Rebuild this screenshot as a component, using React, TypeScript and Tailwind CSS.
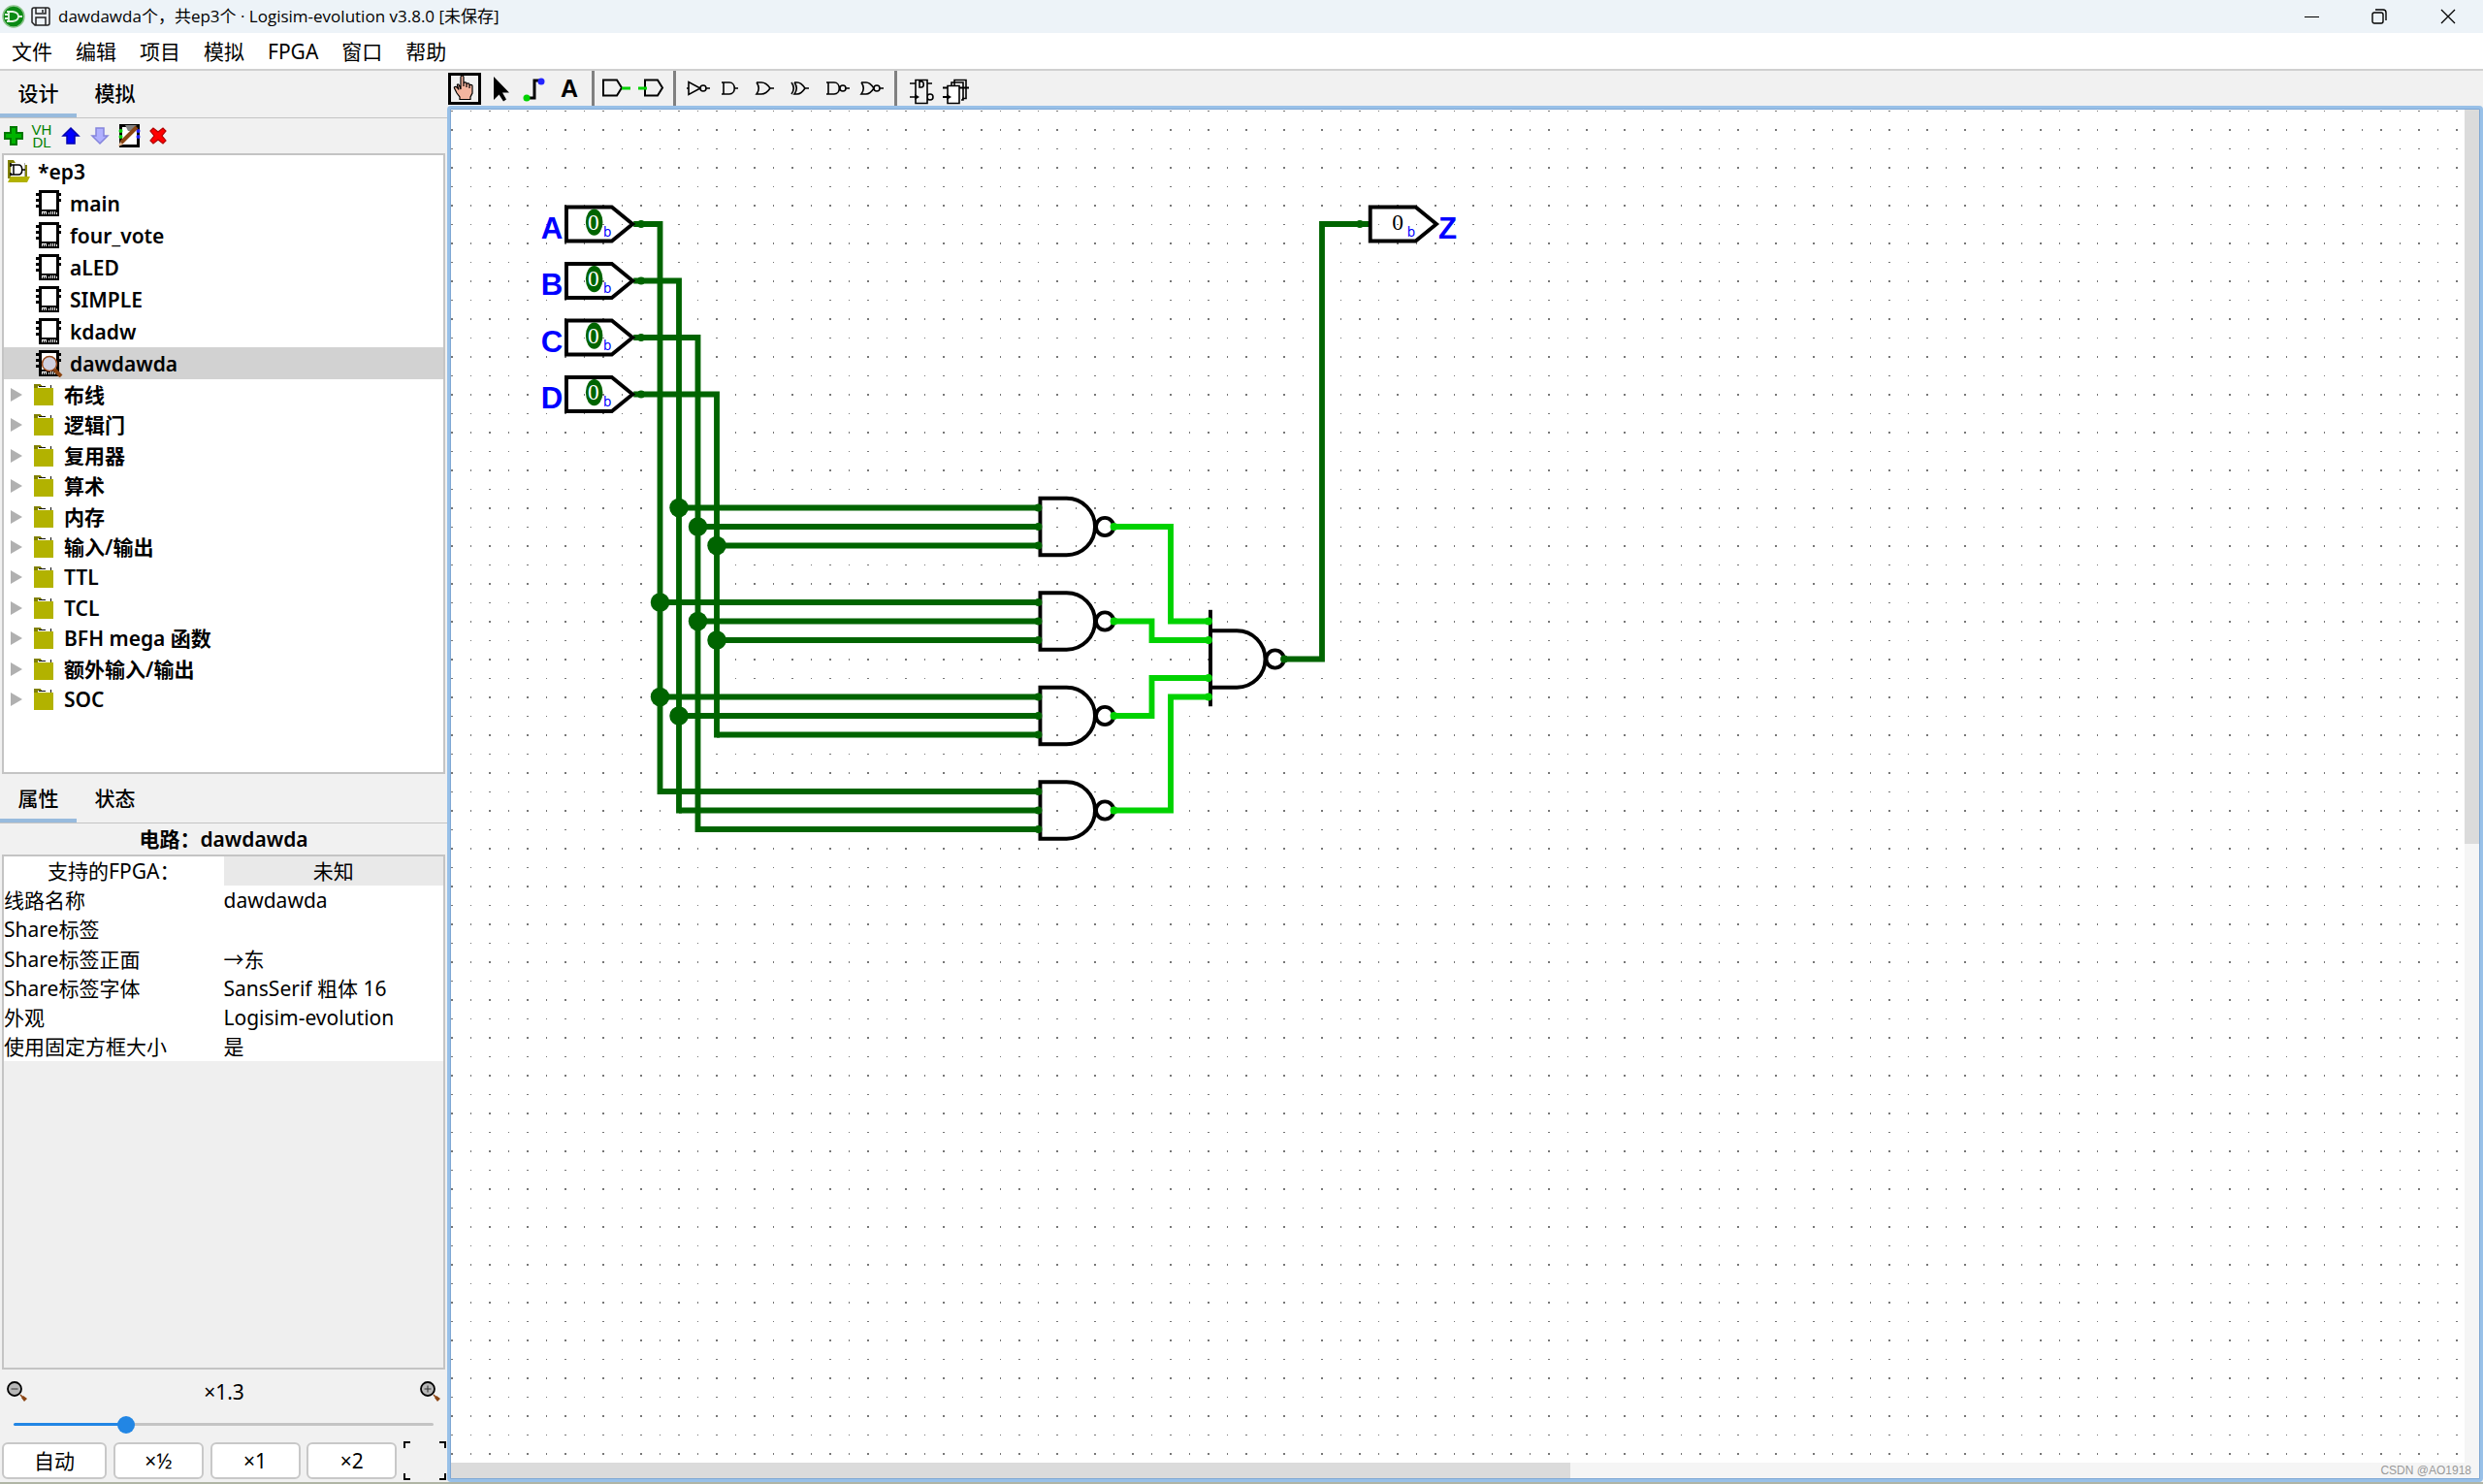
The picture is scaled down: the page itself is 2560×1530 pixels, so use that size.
import React from 'react';

const circuits = ['main', 'four_vote', 'aLED', 'SIMPLE', 'kdadw', 'dawdawda'];

const libraries = ['布线', '逻辑门', '复用器', '算术', '内存', '输入/输出', 'TTL', 'TCL', 'BFH mega 函数', '额外输入/输出', 'SOC'];

const menus = ['文件', '编辑', '项目', '模拟', 'FPGA', '窗口', '帮助'];

const attributes = [
    { name: '线路名称', value: 'dawdawda' },
    { name: 'Share标签', value: '' },
    { name: 'Share标签正面', value: <span className="font-['Noto_Sans_CJK_SC',sans-serif]">→东</span> },
    { name: 'Share标签字体', value: 'SansSerif 粗体 16' },
    { name: '外观', value: 'Logisim-evolution' },
    { name: '使用固定方框大小', value: '是' },
];

const ChipIcon: React.FC<{ viewed: boolean }> = ({ viewed }) => (
    <svg width="28" height="28" viewBox="0 0 28 28" shapeRendering="crispEdges">
        <path d="M3 0h21v27H3z" fill="#000" />
        <path d="M6 3h15v17H6z" fill="#fff" />
        <path d="M0 3h4v3H0zM0 9h4v3H0zM0 15h4v3H0zM22 3h4v3h-4zM22 9h4v3h-4z" fill="#000" />
        <path d="M6 22v3M8 22v3M10 22v3M13 23v2M15 22v3M17 22v3M19 22v3M21 23v2M6 22.500h4" stroke="#fff" />
        {viewed && (
            <g shapeRendering="auto">
                <path d="M19 20l7 7" stroke="#8b4513" strokeWidth="4" />
                <circle cx="14" cy="14" r="7.500" fill="#d0d0e0" stroke="#9a4a1c" strokeWidth="1.500" />
            </g>
        )}
    </svg>
);

const FolderIcon = () => (
    <svg width="20" height="22" viewBox="0 0 20 22" shapeRendering="crispEdges">
        <path d="M0 0h7v1h1v2h3v3H0z" fill="#808000" />
        <path d="M4 2h14v3H4z" fill="#fff" />
        <path d="M5 2.500h7M17.500 1v3" stroke="#111" />
        <path d="M0 4h20v18H0z" fill="#b2b200" />
    </svg>
);

const ProjectIcon = () => (
    <svg width="24" height="24" viewBox="0 0 24 24">
        <path d="M0 0h6l2 3h-5v16H0zM18 5h2v14h-2z" fill="#808000" />
        <path d="M3 3h15v15H3z" fill="#fff" />
        <path d="M17.500 3v14" stroke="#aaa" />
        <path d="M3 5h8c5 0 5 10 0 10H3M6 5v10M15 10h3M3 3v4M3 13v3" fill="none" stroke="#000" strokeWidth="1.500" />
        <path d="M0 23l3-6h20l-3 6z" fill="#b2b200" />
    </svg>
);

const ExpandIcon = () => (
    <svg width="12" height="14" viewBox="0 0 12 14">
        <path d="M0 0l12 7-12 7z" fill="#b0b0b0" />
    </svg>
);

const ZoomIcon: React.FC<{ plus?: boolean }> = ({ plus }) => (
    <svg width="22" height="22" viewBox="0 0 22 22">
        <path d="M14 14l3 3" stroke="#8b4513" strokeWidth="1.500" />
        <path d="M15 17l2-2 4 3-3 3z" fill="#8b4513" />
        <circle cx="8" cy="8" r="7" fill="#b8b8b8" stroke="#000" strokeWidth="1.800" />
        <path d={plus ? 'M4.500 8h7M8 4.500v7' : 'M4.500 8h7'} stroke="#333" />
    </svg>
);

const toolIcons: Record<string, React.ReactNode> = {
    poke: (
        <>
            <rect x="2.500" y="3.500" width="31" height="30" fill="none" stroke="#000" strokeWidth="3" />
            <path
                d="M14 19V6.500c0-2 3-2 3 0V16v-3c0-1.500 3-1.500 3 0v4-3c0-1.500 3-1.500 3 0v4-2.500c0-1.500 3-1.500 3 0V23l-2 4v2.500H13V27l-3-4-2.500-5c-1-1.500 1.500-2 2.500-1l2 2.500L10.500 15c-.5-1.500 1.500-1.500 2 0z"
                fill="#f4b59f"
                strokeWidth="1.200"
            />
        </>
    ),
    select: <path d="M10 6v24l5.500-5.500 4.500 7 3-2-4-7h7z" fill="#000" stroke="none" />,
    wire: (
        <>
            <path d="M10 28h6V10h7" fill="none" stroke="#000" strokeWidth="3" />
            <circle cx="8" cy="28" r="3.500" fill="#00d200" stroke="none" />
            <circle cx="23" cy="11" r="3.500" fill="#2424ff" stroke="none" />
        </>
    ),
    inputPin: (
        <>
            <path d="M5 9.500h14l5 8-5 8H5z" fill="none" stroke="#000" strokeWidth="2" />
            <path d="M24 18h9" stroke="#00d200" strokeWidth="3" />
        </>
    ),
    outputPin: (
        <>
            <path d="M12 9.500h13l5 8-5 8H12z" fill="none" stroke="#000" strokeWidth="2" />
            <path d="M5 18h9" stroke="#00d200" strokeWidth="3" />
        </>
    ),
    not: <path d="M5 18h2M7 11.500v13L19 18zM19 18a3 3 0 1 0 6 0a3 3 0 1 0-6 0M25 18h4" />,
    and: <path d="M5 12h2v12M5 24h8c7 0 7-12 0-12H5M18 18h4" />,
    or: <path d="M5 12h5c4 0 7 3 9 6-2 3-5 6-9 6H5c3-4 3-8 0-12M19 18h4" />,
    xor: <path d="M5 12c3 4 3 8 0 12M8 12h3c4 0 6 3 8 6-2 3-4 6-8 6H8c3-4 3-8 0-12M19 18h4" />,
    nand: <path d="M5 12h2v12M5 24h8c7 0 7-12 0-12H5M19 18a3 3 0 1 0 6 0a3 3 0 1 0-6 0M25 18h4" />,
    nor: <path d="M5 12h5c4 0 6 3 8 6-2 3-4 6-8 6H5c3-4 3-8 0-12M18 18a3 3 0 1 0 6 0a3 3 0 1 0-6 0M24 18h4" />,
    flipflop: (
        <>
            <path d="M13 9.500h12v24H13zM7 13h6M25 13h5M7 27h6M17 11v6h2c3 0 3-6 0-6zM25 27a3 3 0 1 0 6 0a3 3 0 1 0-6 0" />
            <path d="M12 24v6l5-3z" fill="#000" stroke="none" />
        </>
    ),
    register: (
        <>
            <path d="M17 16v-6.500h12v19h-4M14 15v-3h12v18h-2" fill="none" />
            <path d="M10 15.500h12v18H10z" fill="#fff" />
            <path d="M5 17.500h5M22 17.500h10M5 27h6" strokeWidth="2" />
            <path d="M9 24v6l5-3z" fill="#000" stroke="none" />
        </>
    ),
};

const ToolButton: React.FC<{ label: string; icon: string }> = ({ label, icon }) => (
    <button type="button" aria-label={label} className="h-9 w-9 shrink-0">
        <svg
            width="36"
            height="36"
            viewBox={['poke', 'inputPin', 'outputPin'].includes(icon) ? '0 0 36 36' : '-2 0 36 36'}
            fill="none"
            stroke="#000"
            strokeWidth="1.600"
        >
            {toolIcons[icon]}
        </svg>
    </button>
);

const Separator = () => (
    <div className="flex w-3 justify-center">
        <div className="h-9 w-[3px] bg-[#808080]" />
    </div>
);

const Toolbar = () => (
    <div className="flex h-9 items-center">
        <ToolButton label="Poke" icon="poke" />
        <ToolButton label="Select" icon="select" />
        <ToolButton label="Wiring" icon="wire" />
        <button type="button" className="h-9 w-9 font-['Liberation_Sans'] text-[25px] font-bold leading-9">A</button>
        <Separator />
        <ToolButton label="Input pin" icon="inputPin" />
        <ToolButton label="Output pin" icon="outputPin" />
        <Separator />
        <ToolButton label="NOT gate" icon="not" />
        <ToolButton label="AND gate" icon="and" />
        <ToolButton label="OR gate" icon="or" />
        <ToolButton label="XOR gate" icon="xor" />
        <ToolButton label="NAND gate" icon="nand" />
        <ToolButton label="NOR gate" icon="nor" />
        <Separator />
        <ToolButton label="D flip-flop" icon="flipflop" />
        <ToolButton label="Register" icon="register" />
    </div>
);

const Tabs: React.FC<{ items: string[] }> = ({ items }) => (
    <div role="tablist" className="flex border-b border-[#c4c4c4]">
        {items.map((item, i) => (
            <button
                key={item}
                type="button"
                role="tab"
                aria-selected={i === 0}
                className={`h-12 w-[79px] border-b-4 pt-px font-medium ${i === 0 ? 'border-[#98bbdd]' : 'border-transparent'}`}
            >
                {item}
            </button>
        ))}
    </div>
);

const ExplorerToolbar = () => (
    <div className="flex h-9 items-center">
        <button type="button" aria-label="Add circuit" className="flex w-7 justify-center">
            <svg width="20" height="20" viewBox="0 0 20 20">
                <path d="M7 1h6v6h6v6h-6v6H7v-6H1V7h6z" fill="#00b400" stroke="#007800" strokeWidth="2" />
            </svg>
        </button>
        <button type="button" className="flex w-[30px] flex-col items-center font-['Liberation_Sans'] text-[15px] leading-[13px] text-[#008000]">
            <span>VH</span>
            <span>DL</span>
        </button>
        <button type="button" aria-label="Move up" className="flex w-[30px] justify-center">
            <svg width="20" height="20" viewBox="0 0 20 20">
                <path d="M10 2l8 8h-4v8H6v-8H2z" fill="#0000ff" stroke="#0000b0" strokeWidth="1.500" />
            </svg>
        </button>
        <button type="button" aria-label="Move down" className="flex w-[30px] justify-center">
            <svg width="20" height="20" viewBox="0 0 20 20">
                <path d="M10 18l8-8h-4V2H6v8H2z" fill="#b0b0ff" stroke="#8484dc" strokeWidth="1.500" />
            </svg>
        </button>
        <button type="button" aria-label="Edit appearance" className="flex w-[30px] justify-center">
            <svg width="24" height="24" viewBox="0 0 24 24">
                <path d="M3.500 1.500h18v21h-18z" fill="#fff" stroke="#000" strokeWidth="3" />
                <path d="M8 1h12l-6 6h-3z" fill="#808080" />
                <circle cx="3.500" cy="7" r="2" fill="#00d200" />
                <circle cx="3.500" cy="13" r="2" fill="#00d200" />
                <circle cx="21.500" cy="7" r="2" fill="#2424ff" />
                <circle cx="21.500" cy="13" r="2" fill="#2424ff" />
                <path d="M4 19L20 3" stroke="#8b4513" strokeWidth="4" />
                <path d="M1 23l2-5 3 3z" fill="#e8b890" />
            </svg>
        </button>
        <button type="button" aria-label="Remove circuit" className="flex w-[30px] justify-center">
            <svg width="20" height="20" viewBox="0 0 20 20">
                <path d="M2 5l3-3 5 4 5-4 3 3-4 5 4 5-3 3-5-4-5 4-3-3 4-5z" fill="#ff0000" stroke="#b00000" strokeWidth="1.200" />
            </svg>
        </button>
    </div>
);

const Explorer = () => (
    <div className="mx-[2px] h-[640px] border-2 border-[#c4c4c4] bg-white font-semibold">
        <div className="flex h-[33px] items-center gap-[7px] pl-1">
            <ProjectIcon />
            <span>*ep3</span>
        </div>
        {circuits.map((name) => (
            <div key={name} className={`flex h-[33px] items-center gap-[7px] pl-[33px] ${name === 'dawdawda' ? 'bg-[#d2d2d2]' : ''}`}>
                <ChipIcon viewed={name === 'dawdawda'} />
                <span>{name}</span>
            </div>
        ))}
        <div className="grid h-[346px] auto-rows-fr">
            {libraries.map((name) => (
                <div key={name} className="flex items-center pl-[7px]">
                    <ExpandIcon />
                    <span className="ml-3 mr-[11px]"><FolderIcon /></span>
                    <span>{name}</span>
                </div>
            ))}
        </div>
    </div>
);

const AttributeTable = () => (
    <div className="mx-[2px] flex-1 border-2 border-[#c4c4c4] bg-[#efefef]">
        <table className="w-full table-fixed border-collapse bg-white text-left">
            <thead>
                <tr className="h-[30px] text-center">
                    <th className="font-normal leading-[30px]">支持的FPGA：</th>
                    <th className="bg-[#e9e9e9] font-normal leading-[30px]">未知</th>
                </tr>
            </thead>
            <tbody>
                {attributes.map((attr) => (
                    <tr key={attr.name} className="h-[30px]">
                        <td className="p-0 leading-[30px]">{attr.name}</td>
                        <td className="p-0 leading-[30px]">{attr.value}</td>
                    </tr>
                ))}
            </tbody>
        </table>
    </div>
);

const ZoomButton: React.FC<{ children: React.ReactNode; wide?: boolean }> = ({ children, wide }) => (
    <button type="button" className={`h-[38px] rounded-md border-2 border-[#c8c8c8] bg-white leading-8 ${wide ? 'w-[108px]' : 'w-[93px]'}`}>
        {children}
    </button>
);

const ZoomPanel = () => (
    <div className="flex h-[116px] flex-col justify-between pt-[7px] pb-[2px]">
        <div className="flex items-center justify-between pl-[7px] pr-[6px] leading-8">
            <button type="button" aria-label="Zoom out"><ZoomIcon /></button>
            <label htmlFor="zoom">×1.3</label>
            <button type="button" aria-label="Zoom in"><ZoomIcon plus /></button>
        </div>
        <input
            id="zoom"
            type="range"
            min={0}
            max={1000}
            defaultValue={258}
            className="mx-[14px] h-[3px] appearance-none rounded-full bg-[linear-gradient(to_right,#2286e4_27%,#c4c4c4_27%)] [&::-webkit-slider-thumb]:h-[18px] [&::-webkit-slider-thumb]:w-[18px] [&::-webkit-slider-thumb]:appearance-none [&::-webkit-slider-thumb]:rounded-full [&::-webkit-slider-thumb]:bg-[#2286e4]"
        />
        <div className="flex items-center justify-between pl-[2px] pr-px">
            <ZoomButton wide>自动</ZoomButton>
            <ZoomButton>×½</ZoomButton>
            <ZoomButton>×1</ZoomButton>
            <ZoomButton>×2</ZoomButton>
            <button type="button" aria-label="Center view">
                <svg width="44" height="40" viewBox="0 0 44 40" fill="none" stroke="#000" strokeWidth="2">
                    <path d="M1 7V1h6M37 1h6v6M43 33v6h-6M7 39H1v-6" />
                </svg>
            </button>
        </div>
    </div>
);

// Circuit coordinates are in Logisim units, 10 per grid step
const inputs = [
    { label: 'A', y: 60, x: 110, end: 360 },
    { label: 'B', y: 90, x: 120, end: 370 },
    { label: 'C', y: 120, x: 130, end: 380 },
    { label: 'D', y: 150, x: 140, end: 330 },
];

const gates = [
    { y: 220, from: [120, 130, 140] },
    { y: 270, from: [110, 130, 140] },
    { y: 320, from: [110, 120, 140] },
    { y: 370, from: [110, 120, 130] },
];

const junctions = [[120, 210], [130, 220], [140, 230], [110, 260], [130, 270], [140, 280], [110, 310], [120, 320]];

const NandGate: React.FC<{ x: number; y: number }> = ({ x, y }) => (
    <g fill="none" stroke="#000" strokeWidth="2">
        <path d={`M${x - 25} ${y - 15}h-14v30h14a15 15 0 0 0 0-30z`} />
        <circle cx={x - 4.8} cy={y} r="4.700" />
    </g>
);

const Circuit = () => (
    <svg className="block h-full w-full" role="img" aria-label="dawdawda">
        <defs>
            <pattern id="grid" width="39" height="39" patternUnits="userSpaceOnUse">
                <path d="M0 20h2v2H0zM20 20h1v2h-1zM0 1h2v1H0zM20 1h1v1h-1z" fill="#777" shapeRendering="crispEdges" />
            </pattern>
        </defs>
        <rect width="100%" height="100%" fill="url(#grid)" />
        <g transform="translate(1 1) scale(1.950)">
            <g fill="none" stroke="#006400" strokeWidth="3" strokeLinejoin="miter">
                {inputs.map((p) => <path key={p.label} d={`M96 ${p.y}H${p.x}V${p.end + 1.5}`} />)}
                {gates.map((g) => g.from.map((x, i) => <path key={x} d={`M${x} ${g.y - 10 + i * 10}H310`} />))}
                <path d="M440 290H460V60H486" />
            </g>
            <g fill="#006400">
                {junctions.map(([x, y]) => <circle key={`${x}-${y}`} cx={x} cy={y} r="5" />)}
                {inputs.map((p) => <circle key={p.label} cx="100" cy={p.y} r="2" />)}
                <circle cx="480" cy="60" r="2" />
            </g>
            {gates.map((g) => <NandGate key={g.y} x={350} y={g.y} />)}
            <NandGate x={440} y={290} />
            <path d="M401 264v51" stroke="#000" strokeWidth="2" />
            <g fill="#006400">
                {gates.map((g) => [-10, 0, 10].map((d) => <circle key={d} cx="310" cy={g.y + d} r="2" />))}
                <circle cx="440" cy="290" r="2" />
            </g>
            <path
                d="M350 220H380V270H400M350 270H370V280H400M350 320H370V300H400M350 370H380V310H400"
                fill="none"
                stroke="#00d200"
                strokeWidth="3"
            />
            <g fill="#00d200">
                {gates.map((g) => <circle key={g.y} cx="350" cy={g.y} r="2" />)}
                {[270, 280, 300, 310].map((y) => <circle key={y} cx="400" cy={y} r="2" />)}
            </g>
            {inputs.map((p) => (
                <g key={p.label}>
                    <path d={`M60.500 ${p.y - 9}h24l11 9-11 9h-24z`} fill="none" stroke="#000" strokeWidth="2" />
                    <ellipse cx="75.200" cy={p.y - 1} rx="4.500" ry="7" fill="#006400" />
                    <text x="74.800" y={p.y + 3} textAnchor="middle" fill="#fff" className="font-['Liberation_Serif'] text-[12px]">0</text>
                    <text x="80" y={p.y + 6.5} fill="#0000ff" className="font-['Noto_Sans'] text-[7px]">b</text>
                    <text x="47" y={p.y + 7.7} fill="#0000ff" className="font-['Liberation_Sans'] text-[16px] font-bold">{p.label}</text>
                </g>
            ))}
            <path d="M485.500 51h24l11 9-11 9h-24z" fill="none" stroke="#000" strokeWidth="2" />
            <text x="500" y="63" textAnchor="middle" className="font-['Liberation_Serif'] text-[12px]">0</text>
            <text x="505" y="66.500" fill="#0000ff" className="font-['Noto_Sans'] text-[7px]">b</text>
            <text x="521.500" y="67.700" fill="#0000ff" className="font-['Liberation_Sans'] text-[16px] font-bold">Z</text>
        </g>
    </svg>
);

const TitleBar = () => (
    <header className="flex h-[34px] items-center bg-[#edf3f8] pl-[2px] text-[17px]">
        <svg width="24" height="24" viewBox="0 0 24 24">
            <circle cx="12" cy="12" r="11" fill="#0a8a14" stroke="#8cc48c" strokeWidth="1.500" />
            <path d="M5 7h6c8 1 8 9 0 10H5M3 10h4M3 14h4M17 12h4M7 7v10" fill="none" stroke="#e4f4e4" strokeWidth="1.800" />
        </svg>
        <svg className="ml-[6px]" width="20" height="20" viewBox="0 0 20 20" fill="none" stroke="#222" strokeWidth="1.500">
            <path d="M1 3a2 2 0 0 1 2-2h14a2 2 0 0 1 2 2v14a2 2 0 0 1-2 2H4l-3-3zM5 1v6h10V1M5 19v-8h10v8M12 3v3" />
        </svg>
        <h1 className="ml-2 font-['Open_Sans','Noto_Sans_CJK_SC',sans-serif]">dawdawda个，共ep3个 · Logisim-evolution v3.8.0 [未保存]</h1>
        <div className="ml-auto flex items-center">
            <button type="button" aria-label="Minimize" className="flex w-[70px] justify-center">
                <svg width="15" height="15"><path d="M0 7.500h15" stroke="#000" /></svg>
            </button>
            <button type="button" aria-label="Restore" className="flex w-[70px] justify-center">
                <svg width="16" height="16" fill="none" stroke="#000" strokeWidth="1.400">
                    <rect x="1" y="4" width="11" height="11" rx="2" />
                    <path d="M4 1h8a3 3 0 0 1 3 3v8" />
                </svg>
            </button>
            <button type="button" aria-label="Close" className="flex w-[72px] justify-center">
                <svg width="16" height="16" stroke="#000" strokeWidth="1.300"><path d="M1 1l14 14M15 1L1 15" /></svg>
            </button>
        </div>
    </header>
);

const App: React.FC = () => {
    return (
        <div className="flex min-h-screen flex-col border-b-2 border-[#b0b5a5] bg-[#f1f1f1] font-['Noto_Sans','Noto_Sans_CJK_SC',sans-serif] text-[21px] leading-7 text-black">
            <TitleBar />
            <nav className="flex h-[39px] items-center border-b-2 border-[#d0d0d0] bg-white">
                {menus.map((menu) => (
                    <button key={menu} type="button" className="px-3">{menu}</button>
                ))}
            </nav>

            <div className="flex flex-1">
                {/* Explorer, attributes and zoom */}
                <aside className="flex w-[461px] shrink-0 flex-col">
                    <Tabs items={['设计', '模拟']} />
                    <ExplorerToolbar />
                    <Explorer />
                    <div className="pt-[2px]">
                        <Tabs items={['属性', '状态']} />
                    </div>
                    <h2 className="h-8 text-center font-semibold leading-8">电路：dawdawda</h2>
                    <AttributeTable />
                    <ZoomPanel />
                </aside>

                {/* Canvas */}
                <main className="flex min-w-0 flex-1 flex-col">
                    <Toolbar />
                    <div className="relative grid flex-1 grid-cols-[1fr_15px] grid-rows-[1fr_16px] rounded-sm border-4 border-[#98c0e8] bg-white outline-1 -outline-offset-4 outline-[#80a8d4]">
                        <Circuit />
                        <div className="bg-[#f5f5f5]">
                            <div className="h-[54.3%] bg-[#dbdbdb]" />
                        </div>
                        <div className="col-span-2 bg-[#f5f5f5]">
                            <div className="h-full w-[55.2%] bg-[#dbdbdb]" />
                        </div>
                        <span className="absolute right-2 bottom-0 font-['Liberation_Sans'] text-[12px] leading-4 text-[#999]">CSDN @AO1918</span>
                    </div>
                </main>
            </div>
        </div>
    );
};

export default App;
